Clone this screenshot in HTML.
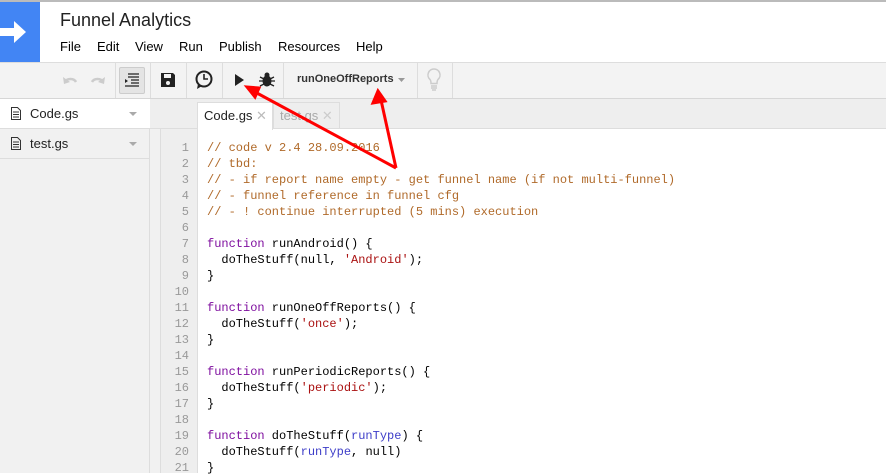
<!DOCTYPE html>
<html><head><style>
*{margin:0;padding:0;box-sizing:border-box}
body{width:886px;height:473px;overflow:hidden;background:#fff;font-family:"Liberation Sans",Arial,sans-serif;position:relative}
.abs{position:absolute}
.code{font-family:"Liberation Mono",monospace;font-size:12px;line-height:16px;white-space:pre}
.c{color:#b06a2a}.k{color:#7f0f9f}.s{color:#a11}.v{color:#3d3dc8}
.ln{font-family:"Liberation Mono",monospace;font-size:12px;line-height:16px;color:#999;text-align:right;white-space:pre}
.sep{position:absolute;top:63px;width:1px;height:35px;background:#ddd}
.m{position:absolute;top:39px;font-size:13px;color:#000}
</style></head><body>
<div class="abs" style="left:0;top:0;width:886px;height:2px;background:#bbb"></div>
<div class="abs" style="left:0;top:2px;width:40px;height:60px;background:#4285f4"></div>
<svg class="abs" style="left:0;top:17px" width="30" height="30"><path d="M0 11h14V4l12 11-12 11v-7H0z" fill="#fff"/></svg>
<div class="abs" style="left:60px;top:10px;font-size:18px;color:#222">Funnel Analytics</div>
<div class="m" style="left:60px">File</div><div class="m" style="left:97px">Edit</div><div class="m" style="left:135px">View</div><div class="m" style="left:179px">Run</div><div class="m" style="left:219px">Publish</div><div class="m" style="left:278px">Resources</div><div class="m" style="left:356px">Help</div>
<div class="abs" style="left:0;top:62px;width:886px;height:1px;background:#ddd"></div>
<div class="abs" style="left:0;top:63px;width:886px;height:35px;background:#f3f3f3"></div>
<div class="abs" style="left:0;top:98px;width:886px;height:1px;background:#d6d6d6"></div>
<div class="abs" style="left:150px;top:99px;width:736px;height:30px;background:#eee"></div>
<div class="abs" style="left:150px;top:128px;width:736px;height:1px;background:#ddd"></div>
<div class="sep" style="left:115px"></div><div class="sep" style="left:150px"></div><div class="sep" style="left:186px"></div><div class="sep" style="left:222px"></div><div class="sep" style="left:283px"></div><div class="sep" style="left:417px"></div><div class="sep" style="left:452px"></div>
<svg class="abs" style="left:62px;top:73px" width="44" height="14"><path d="M3 9a6 5 0 0 1 11 0" stroke="#ccc" stroke-width="2.5" fill="none"/><path d="M1 4l1 7 6-2z" fill="#ccc"/><path d="M41 9a6 5 0 0 0-11 0" stroke="#ccc" stroke-width="2.5" fill="none"/><path d="M43 4l-1 7-6-2z" fill="#ccc"/></svg>
<div class="abs" style="left:119px;top:67px;width:26px;height:27px;background:#e4e4e4;border:1px solid #ccc;border-radius:2px"></div>
<svg class="abs" style="left:124px;top:73px" width="16" height="14"><path d="M4 1h11M4 4h11M7 7h8M7 10h8M1 13h14" stroke="#222" stroke-width="1.3"/><path d="M1 6l3 2-3 2z" fill="#222"/></svg>
<svg class="abs" style="left:160px;top:72px" width="16" height="16"><path d="M1 1h12l2 2v12H1z" fill="#222"/><rect x="4" y="2" width="7" height="4" fill="#f3f3f3"/><circle cx="8" cy="11" r="2" fill="#f3f3f3"/></svg>
<svg class="abs" style="left:194px;top:69px" width="20" height="22"><circle cx="10" cy="10" r="7.5" fill="none" stroke="#222" stroke-width="2"/><path d="M10 5v5h4" stroke="#222" stroke-width="1.6" fill="none"/><path d="M4 15l-1 5 5-3z" fill="#222"/></svg>
<svg class="abs" style="left:235px;top:74px" width="10" height="12"><path d="M0 0l9 6-9 6z" fill="#222"/></svg>
<svg class="abs" style="left:258px;top:71px" width="18" height="18"><ellipse cx="9" cy="10" rx="4.5" ry="5.5" fill="#222"/><circle cx="9" cy="4" r="2.5" fill="#222"/><path d="M2 6l4 2M16 6l-4 2M1 10h4M17 10h-4M2 15l4-2M16 15l-4-2" stroke="#222" stroke-width="1.3"/></svg>
<div class="abs" style="left:297px;top:73px;font-size:11px;font-weight:bold;color:#333">runOneOffReports</div>
<svg class="abs" style="left:398px;top:78px" width="7" height="4"><path d="M0 0h7L3.5 4z" fill="#999"/></svg>
<svg class="abs" style="left:426px;top:68px" width="16" height="24"><path d="M8 1a6 6 0 0 0-4 10.5c1 1 1 3 1 4h6c0-1 0-3 1-4A6 6 0 0 0 8 1z" fill="none" stroke="#ccc" stroke-width="1.5"/><path d="M5 18h6M5 20h6M6 22h4" stroke="#ccc" stroke-width="1.5"/></svg>
<div class="abs" style="left:0;top:99px;width:150px;height:374px;background:#f1f1f1;border-right:1px solid #ddd"></div>
<div class="abs" style="left:0;top:99px;width:150px;height:30px;background:#fff;border-bottom:1px solid #ddd"></div>
<div class="abs" style="left:0;top:129px;width:150px;height:30px;border-bottom:1px solid #ddd"></div>
<svg class="abs" style="left:11px;top:107px" width="10" height="13"><path d="M.5.5h6l3 3v9h-9z" fill="none" stroke="#333"/><path d="M2 5h6M2 7.5h6M2 10h6" stroke="#333"/></svg>
<svg class="abs" style="left:11px;top:137px" width="10" height="13"><path d="M.5.5h6l3 3v9h-9z" fill="none" stroke="#333"/><path d="M2 5h6M2 7.5h6M2 10h6" stroke="#333"/></svg>
<div class="abs" style="left:30px;top:106px;font-size:13px;color:#222">Code.gs</div>
<div class="abs" style="left:30px;top:136px;font-size:13px;color:#222">test.gs</div>
<svg class="abs" style="left:129px;top:112px" width="8" height="4"><path d="M0 0h8L4 4z" fill="#aaa"/></svg>
<svg class="abs" style="left:129px;top:142px" width="8" height="4"><path d="M0 0h8L4 4z" fill="#aaa"/></svg>
<div class="abs" style="left:197px;top:102px;width:76px;height:28px;background:#fff;border:1px solid #ddd;border-bottom:none"></div>
<div class="abs" style="left:204px;top:108px;font-size:13px;color:#222">Code.gs <span style="color:#bbb">✕</span></div>
<div class="abs" style="left:273px;top:102px;width:67px;height:26px;background:#eee;border:1px solid #ddd;border-bottom:none"></div>
<div class="abs" style="left:280px;top:108px;font-size:13px;color:#aaa">test.gs <span style="color:#ccc">✕</span></div>
<div class="abs" style="left:150px;top:129px;width:10px;height:344px;background:#f1f1f1"></div>
<div class="abs" style="left:160px;top:129px;width:38px;height:344px;background:#eee;border-left:1px solid #ddd;border-right:1px solid #ddd"></div>
<div class="abs ln" style="left:160px;top:140px;width:29px">1
2
3
4
5
6
7
8
9
10
11
12
13
14
15
16
17
18
19
20
21</div>
<div class="abs code" style="left:207px;top:140px"><span class="c">// code v 2.4 28.09.2016
// tbd:
// - if report name empty - get funnel name (if not multi-funnel)
// - funnel reference in funnel cfg
// - ! continue interrupted (5 mins) execution</span>

<span class="k">function</span> runAndroid() {
  doTheStuff(null, <span class="s">'Android'</span>);
}

<span class="k">function</span> runOneOffReports() {
  doTheStuff(<span class="s">'once'</span>);
}

<span class="k">function</span> runPeriodicReports() {
  doTheStuff(<span class="s">'periodic'</span>);
}

<span class="k">function</span> doTheStuff(<span class="v">runType</span>) {
  doTheStuff(<span class="v">runType</span>, null)
}</div>
<svg class="abs" style="left:0;top:0" width="886" height="473"><g stroke="#f00" stroke-width="3" fill="#f00"><path d="M396 168L381 100" fill="none"/><path d="M378 91l-5 12 12-2z"/><path d="M396 168L255 92" fill="none"/><path d="M247 87l8 10 4-9z"/></g></svg>
</body></html>
